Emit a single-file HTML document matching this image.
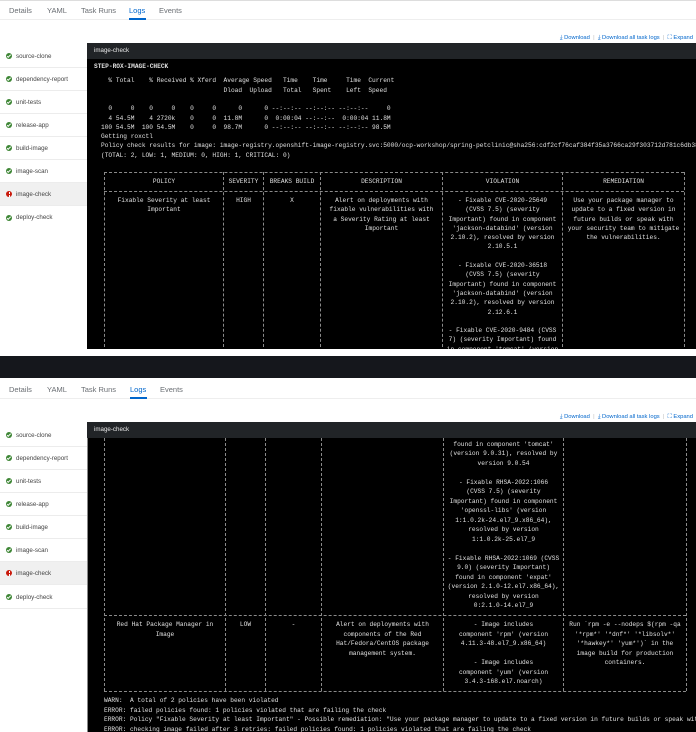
<!DOCTYPE html>
<html><head><meta charset="utf-8"><style>
*{margin:0;padding:0;box-sizing:border-box}
body{width:696px;height:732px;overflow:hidden;background:#fff;position:relative;font-family:"Liberation Sans",sans-serif}
.a{position:absolute}
.tab{position:absolute;font-size:7.5px;color:#6a6e73;white-space:nowrap}
.tab.on{color:#0066cc}
.side{position:absolute;left:0;width:87px;height:23px;font-size:6.2px;color:#444;border-bottom:1px solid #ececec;display:flex;align-items:center;padding-left:6px}
.side.on{background:#f0f0f0}
.ic{width:6px;height:6px;border-radius:50%;background:#3e8635;margin-right:4px;position:relative;flex:none}
.ic:after{content:"";position:absolute;left:1.6px;top:1.1px;width:1.4px;height:2.6px;border:solid #fff;border-width:0 1px 1px 0;transform:rotate(45deg)}
.ic.r{background:#c9190b}
.ic.r:after{left:2.5px;top:1px;width:1px;height:2.4px;border:0;background:#fff;transform:none;box-shadow:0 3px 0 -0px #fff}
.dl{position:absolute;right:3px;font-size:5.8px;color:#0066cc;white-space:nowrap}
.hdr{position:absolute;left:87px;width:609px;height:16px;background:#212427;color:#e8e8e8;font-size:6.2px;padding-left:7px;line-height:16px}
.body{position:absolute;left:87px;width:609px;background:#000;overflow:hidden;font-family:"Liberation Mono",monospace;font-size:6.2px;color:#e0e0e0}
.pre{position:absolute;white-space:pre}
.c{position:absolute;white-space:pre;text-align:center}
.v{position:absolute;width:0;border-left:1px dashed #8a8a8a}
.h{position:absolute;height:0;border-top:1px dashed #8a8a8a}
</style></head><body>

<!-- TOP -->
<div class="a" style="left:0;top:0;width:696px;height:1px;background:#ddd"></div>
<div class="tab" style="left:9px;top:6px">Details</div>
<div class="tab" style="left:47px;top:6px">YAML</div>
<div class="tab" style="left:81px;top:6px">Task Runs</div>
<div class="tab on" style="left:129px;top:6px">Logs</div>
<div class="tab" style="left:159px;top:6px">Events</div>
<div class="a" style="left:0;top:19px;width:696px;height:1px;background:#eee"></div>
<div class="a" style="left:129px;top:18px;width:17px;height:2px;background:#0066cc"></div>
<div class="dl" style="top:35px">⤓ Download &nbsp;<span style="color:#bbb">|</span>&nbsp; ⤓ Download all task logs &nbsp;<span style="color:#bbb">|</span>&nbsp; ⛶ Expand</div>

<div class="side" style="top:45px"><span class="ic"></span>source-clone</div>
<div class="side" style="top:68px"><span class="ic"></span>dependency-report</div>
<div class="side" style="top:91px"><span class="ic"></span>unit-tests</div>
<div class="side" style="top:114px"><span class="ic"></span>release-app</div>
<div class="side" style="top:137px"><span class="ic"></span>build-image</div>
<div class="side" style="top:160px"><span class="ic"></span>image-scan</div>
<div class="side on" style="top:183px"><span class="ic r"></span>image-check</div>
<div class="side" style="top:206px;border-bottom:0"><span class="ic"></span>deploy-check</div>

<div class="hdr" style="top:43px">image-check</div>
<div class="body" style="top:59px;height:290px;line-height:9.3px">
<div class="pre" style="left:7px;top:3px;font-weight:bold">STEP-ROX-IMAGE-CHECK</div>
<div class="pre" style="left:14px;top:17.4px">  % Total    % Received % Xferd  Average Speed   Time    Time     Time  Current
                                 Dload  Upload   Total   Spent    Left  Speed

  0     0    0     0    0     0      0      0 --:--:-- --:--:-- --:--:--     0
  4 54.5M    4 2720k    0     0  11.8M      0  0:00:04 --:--:--  0:00:04 11.8M
100 54.5M  100 54.5M    0     0  98.7M      0 --:--:-- --:--:-- --:--:-- 98.5M
Getting roxctl
Policy check results for image: image-registry.openshift-image-registry.svc:5000/ocp-workshop/spring-petclinic@sha256:cdf2cf76caf384f35a3766ca29f303712d781c6db38
(TOTAL: 2, LOW: 1, MEDIUM: 0, HIGH: 1, CRITICAL: 0)</div>
<div class="h" style="left:17px;width:580px;top:113px"></div>
<div class="h" style="left:17px;width:580px;top:132px"></div>
<div class="v" style="left:17px;top:113px;height:180px"></div>
<div class="v" style="left:136px;top:113px;height:180px"></div>
<div class="v" style="left:176px;top:113px;height:180px"></div>
<div class="v" style="left:233px;top:113px;height:180px"></div>
<div class="v" style="left:355px;top:113px;height:180px"></div>
<div class="v" style="left:475px;top:113px;height:180px"></div>
<div class="v" style="left:597px;top:113px;height:180px"></div>
<div class="c" style="left:18px;width:118px;top:118px">POLICY</div>
<div class="c" style="left:137px;width:39px;top:118px">SEVERITY</div>
<div class="c" style="left:177px;width:56px;top:118px">BREAKS BUILD</div>
<div class="c" style="left:234px;width:121px;top:118px">DESCRIPTION</div>
<div class="c" style="left:356px;width:119px;top:118px">VIOLATION</div>
<div class="c" style="left:476px;width:121px;top:118px">REMEDIATION</div>
<div class="c" style="left:18px;width:118px;top:137px">Fixable Severity at least
Important</div>
<div class="c" style="left:137px;width:39px;top:137px">HIGH</div>
<div class="c" style="left:177px;width:56px;top:137px">X</div>
<div class="c" style="left:234px;width:121px;top:137px">Alert on deployments with
fixable vulnerabilities with
a Severity Rating at least
Important</div>
<div class="c" style="left:356px;width:119px;top:137px">- Fixable CVE-2020-25649
(CVSS 7.5) (severity
Important) found in component
'jackson-databind' (version
2.10.2), resolved by version
2.10.5.1

- Fixable CVE-2020-36518
(CVSS 7.5) (severity
Important) found in component
'jackson-databind' (version
2.10.2), resolved by version
2.12.6.1

- Fixable CVE-2020-9484 (CVSS
7) (severity Important) found
in component 'tomcat' (version</div>
<div class="c" style="left:476px;width:121px;top:137px">Use your package manager to
update to a fixed version in
future builds or speak with
your security team to mitigate
the vulnerabilities.</div>
</div>

<!-- separator band -->
<div class="a" style="left:0;top:356px;width:696px;height:22px;background:#15171c"></div>

<!-- BOTTOM -->
<div class="tab" style="left:9px;top:385px">Details</div>
<div class="tab" style="left:47px;top:385px">YAML</div>
<div class="tab" style="left:81px;top:385px">Task Runs</div>
<div class="tab on" style="left:130px;top:385px">Logs</div>
<div class="tab" style="left:160px;top:385px">Events</div>
<div class="a" style="left:0;top:398px;width:696px;height:1px;background:#eee"></div>
<div class="a" style="left:130px;top:397px;width:17px;height:2px;background:#0066cc"></div>
<div class="dl" style="top:414px">⤓ Download &nbsp;<span style="color:#bbb">|</span>&nbsp; ⤓ Download all task logs &nbsp;<span style="color:#bbb">|</span>&nbsp; ⛶ Expand</div>

<div class="side" style="top:424px"><span class="ic"></span>source-clone</div>
<div class="side" style="top:447px"><span class="ic"></span>dependency-report</div>
<div class="side" style="top:470px"><span class="ic"></span>unit-tests</div>
<div class="side" style="top:493px"><span class="ic"></span>release-app</div>
<div class="side" style="top:516px"><span class="ic"></span>build-image</div>
<div class="side" style="top:539px"><span class="ic"></span>image-scan</div>
<div class="side on" style="top:562px"><span class="ic r"></span>image-check</div>
<div class="side" style="top:586px"><span class="ic"></span>deploy-check</div>

<div class="hdr" style="top:422px">image-check</div>
<div class="body" style="top:438px;height:294px;line-height:9.5px;border-left:1px solid #888">
<div class="v" style="left:16px;top:0;height:253px"></div>
<div class="v" style="left:137px;top:0;height:253px"></div>
<div class="v" style="left:177px;top:0;height:253px"></div>
<div class="v" style="left:233px;top:0;height:253px"></div>
<div class="v" style="left:355px;top:0;height:253px"></div>
<div class="v" style="left:475px;top:0;height:253px"></div>
<div class="v" style="left:598px;top:0;height:253px"></div>
<div class="h" style="left:16px;width:582px;top:177px"></div>
<div class="h" style="left:16px;width:582px;top:253px"></div>
<div class="c" style="left:356px;width:119px;top:-8px">7) (severity Important)
found in component 'tomcat'
(version 9.0.31), resolved by
version 9.0.54

- Fixable RHSA-2022:1066
(CVSS 7.5) (severity
Important) found in component
'openssl-libs' (version
1:1.0.2k-24.el7_9.x86_64),
resolved by version
1:1.0.2k-25.el7_9

- Fixable RHSA-2022:1069 (CVSS
9.0) (severity Important)
found in component 'expat'
(version 2.1.0-12.el7.x86_64),
resolved by version
0:2.1.0-14.el7_9</div>
<div class="c" style="left:17px;width:120px;top:182px">Red Hat Package Manager in
Image</div>
<div class="c" style="left:138px;width:39px;top:182px">LOW</div>
<div class="c" style="left:178px;width:55px;top:182px">-</div>
<div class="c" style="left:234px;width:121px;top:182px">Alert on deployments with
components of the Red
Hat/Fedora/CentOS package
management system.</div>
<div class="c" style="left:356px;width:119px;top:182px">- Image includes
component 'rpm' (version
4.11.3-48.el7_9.x86_64)

- Image includes
component 'yum' (version
3.4.3-168.el7.noarch)</div>
<div class="c" style="left:476px;width:122px;top:182px">Run `rpm -e --nodeps $(rpm -qa
'*rpm*' '*dnf*' '*libsolv*'
'*hawkey*' 'yum*')` in the
image build for production
containers.</div>
<div class="pre" style="left:16px;top:258px">WARN:  A total of 2 policies have been violated
ERROR: failed policies found: 1 policies violated that are failing the check
ERROR: Policy "Fixable Severity at least Important" - Possible remediation: "Use your package manager to update to a fixed version in future builds or speak with your security team to mitigate the vulnerabilities."
ERROR: checking image failed after 3 retries: failed policies found: 1 policies violated that are failing the check</div>
</div>
</body></html>
